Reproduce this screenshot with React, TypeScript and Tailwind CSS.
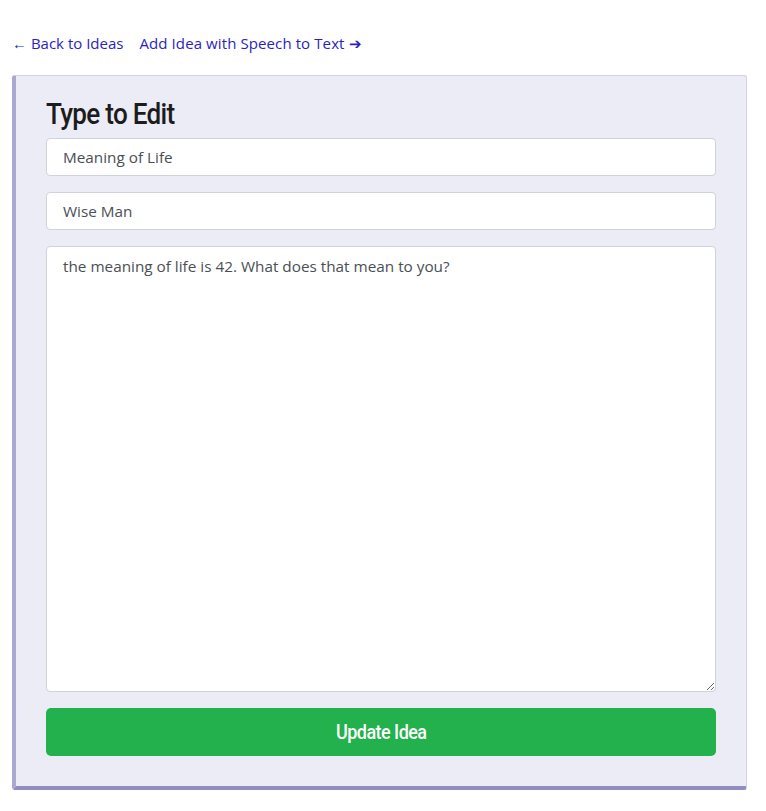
import React from "react";

const App = () => {
  return (
    <div className="w-[766px] min-h-[811px] bg-white font-['Open_Sans','Noto_Sans',sans-serif]">
      <div className="pt-[31px] px-3 flex gap-4 text-[15px] text-[#2b1fbd]">
        <a href="#" className="leading-6">← Back to Ideas</a>
        <a href="#" className="leading-6 tracking-[0.1px]">Add Idea with Speech to Text ➔</a>
      </div>

      <div className="ml-3 mt-[20px] w-[735px] bg-[#ececf6] border border-[#d3d3e0] border-l-4 border-l-[#a9a8d3] border-b-4 border-b-[#918fc0] rounded-[3px] pl-[30px] pr-[30px] pt-[20px] pb-[30px]">
        <h2 className="text-[29px] leading-9 font-medium text-[#1c1c1c] font-['Roboto',sans-serif] tracking-[-0.8px] mb-[6px] origin-left scale-x-[0.9]">
          Type to Edit
        </h2>
        <form className="flex flex-col gap-4">
          <input
            className="h-[38px] w-full bg-white border border-[#cfd2d8] rounded px-4 text-[15.3px] text-[#4a4f55] outline-none"
            defaultValue="Meaning of Life"
          />
          <input
            className="h-[38px] w-full bg-white border border-[#cfd2d8] rounded px-4 text-[15.3px] text-[#4a4f55] outline-none"
            defaultValue="Wise Man"
          />
          <textarea
            className="h-[446px] w-full bg-white border border-[#cfd2d8] rounded px-4 py-[7px] text-[15.3px] leading-6 text-[#4a4f55] outline-none"
            defaultValue="the meaning of life is 42. What does that mean to you?"
          />
          <button
            type="submit"
            className="h-[48px] w-full bg-[#22b14c] rounded-[5px] text-white text-[20px] font-medium font-['Roboto',sans-serif] tracking-[-0.6px]"
          >
            <span className="inline-block scale-x-[0.9]">Update Idea</span>
          </button>
        </form>
      </div>
    </div>
  );
};

export default App;
